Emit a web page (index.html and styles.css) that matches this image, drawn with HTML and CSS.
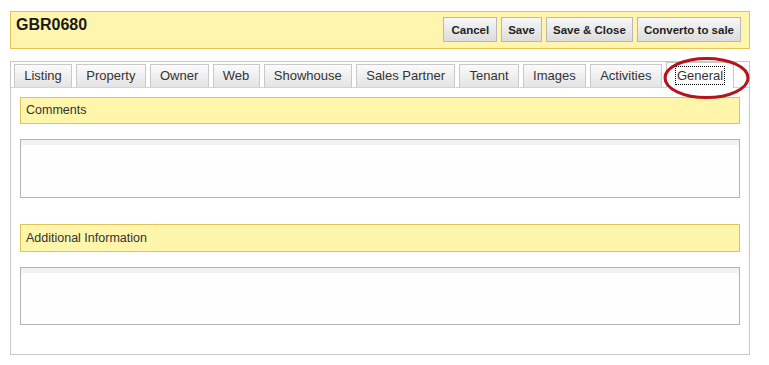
FILE: index.html
```html
<!DOCTYPE html>
<html>
<head>
<meta charset="utf-8">
<title>GBR0680</title>
<link rel="stylesheet" href="styles.css">
</head>
<body>
<div class="page">
  <div class="header">
    <div class="title">GBR0680</div>
    <div class="actions">
      <button class="btn">Cancel</button>
      <button class="btn">Save</button>
      <button class="btn">Save &amp; Close</button>
      <button class="btn">Converto to sale</button>
    </div>
  </div>
  <div class="panel">
    <div class="tabs">
      <div class="tab">Listing</div>
      <div class="tab">Property</div>
      <div class="tab">Owner</div>
      <div class="tab">Web</div>
      <div class="tab">Showhouse</div>
      <div class="tab">Sales Partner</div>
      <div class="tab">Tenant</div>
      <div class="tab">Images</div>
      <div class="tab">Activities</div>
      <div class="tab active"><span class="focus">General</span>
        <svg class="circle" width="87" height="44" viewBox="0 0 87 44"><ellipse cx="43.5" cy="22" rx="41.5" ry="19.5" fill="none" stroke="#b3141e" stroke-width="3"/></svg>
      </div>
    </div>
    <div class="content">
      <div class="section">Comments</div>
      <textarea class="field comments"></textarea>
      <div class="section second">Additional Information</div>
      <textarea class="field"></textarea>
    </div>
  </div>
</div>
</body>
</html>
```

FILE: styles.css
```css
html, body {
  margin: 0;
  padding: 0;
  background: #ffffff;
}
body {
  font-family: "Liberation Sans", Arial, sans-serif;
  color: #222;
}
.page {
  width: 740px;
  padding: 11px 0 0 10px;
}
.header {
  box-sizing: border-box;
  height: 38px;
  border: 1px solid #e3c35a;
  background: #fff5ad;
  display: flex;
  justify-content: space-between;
  align-items: flex-start;
  padding: 0 8px 0 5px;
}
.title {
  font-weight: bold;
  font-size: 16px;
  line-height: 18px;
  padding-top: 4px;
  color: #1a1a1a;
}
.actions {
  display: flex;
  gap: 4px;
  padding-top: 5px;
}
.btn {
  height: 25px;
  box-sizing: border-box;
  border: 1px solid #b8b8b8;
  background: linear-gradient(#f7f7f7, #dcdcdc);
  font-family: "Liberation Sans", Arial, sans-serif;
  font-weight: bold;
  font-size: 11.5px;
  color: #1f1f1f;
  padding: 0 6px;
  margin: 0;
  border-radius: 0;
}
.btn:first-child {
  padding: 0 7px;
}
.panel {
  margin-top: 12px;
  box-sizing: border-box;
  height: 294px;
  border: 1px solid #c8c8c8;
  background: #fff;
}
.tabs {
  display: flex;
  gap: 4px;
  padding: 2px 0 0 3px;
  border-bottom: 1px solid #d4d4d4;
  height: 23px;
  align-items: flex-start;
}
.tab {
  box-sizing: border-box;
  height: 23px;
  border: 1px solid #c9c9c9;
  border-bottom: none;
  background: linear-gradient(#fbfbfb, #e3e3e3);
  font-size: 13px;
  line-height: 21px;
  padding: 0 9.25px;
  color: #333;
  white-space: nowrap;
}
.tab.active {
  position: relative;
  margin-top: -2px;
  height: 26px;
  line-height: 23px;
  background: #fff;
  padding-top: 1px;
}
.focus {
  outline: 1px dotted #000;
  outline-offset: 0;
  padding: 1px 1px;
}
.circle {
  position: absolute;
  left: -4px;
  top: -7px;
  pointer-events: none;
}
.content {
  padding: 9px 9px 0 9px;
}
.section {
  box-sizing: border-box;
  height: 27px;
  border: 1px solid #e2c35a;
  background: #fff5ab;
  font-size: 12.5px;
  line-height: 25px;
  padding-left: 5px;
  color: #333;
}
.section.second {
  height: 28px;
  line-height: 26px;
  margin-top: 26px;
}
.field {
  display: block;
  box-sizing: border-box;
  width: 100%;
  height: 58px;
  margin: 15px 0 0 0;
  border: 1px solid #b4b4b4;
  background: linear-gradient(#f2f2f2 0, #f2f2f2 5px, #fefefe 5px);
  resize: none;
  padding: 0;
}
.field.comments {
  height: 59px;
}
```
